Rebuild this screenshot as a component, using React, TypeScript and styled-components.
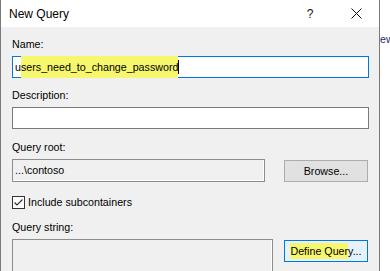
import React from 'react'
import styled, { createGlobalStyle } from 'styled-components'

const GlobalStyle = createGlobalStyle`
  html, body {
    margin: 0;
    padding: 0;
    background: #fff;
  }
  body {
    font-family: 'Liberation Sans', Arial, sans-serif;
    font-size: 10.7px;
    color: #000;
  }
  #root {
    width: 390px;
    height: 271px;
    overflow: hidden;
  }
`

const App: React.FC = () => (
  <>
    <GlobalStyle />
    <Screen>
      <Dialog>
        <TitleBar>
          <Title>New Query</Title>
          <CaptionButton>?</CaptionButton>
          <CaptionButton>
            <svg width="11" height="11" viewBox="0 0 11 11">
              <path d="M0.5 0.5 L10.5 10.5 M10.5 0.5 L0.5 10.5" stroke="#111" strokeWidth="1" fill="none" />
            </svg>
          </CaptionButton>
        </TitleBar>

        <Body>
          <Field>
            <Label>Name:</Label>
            <TextBox $focused>
              u<Marker>sers_need_to_change_password</Marker>
              <Caret />
            </TextBox>
          </Field>

          <Field $top={11}>
            <Label>Description:</Label>
            <TextBox />
          </Field>

          <Field $top={12}>
            <Label>Query root:</Label>
            <Row>
              <ReadOnlyBox $width={253} $height={23}>...\contoso</ReadOnlyBox>
              <Button>Browse...</Button>
            </Row>
          </Field>

          <CheckRow>
            <CheckBox>
              <svg width="11" height="11" viewBox="0 0 11 11">
                <path d="M1.5 5.5 L4 8 L9.5 2.5" stroke="#333" strokeWidth="1.2" fill="none" />
              </svg>
            </CheckBox>
            Include subcontainers
          </CheckRow>

          <Field $top={12}>
            <Label>Query string:</Label>
            <Row>
              <ReadOnlyBox $width={261} $height={60} />
              <Button $default>
                <Marker $pad={2}>Define Quer</Marker>y...
              </Button>
            </Row>
          </Field>
        </Body>
      </Dialog>

      <Backdrop>ew</Backdrop>
    </Screen>
  </>
)

export default App

const Screen = styled.div`
  display: flex;
  width: 390px;
  height: 271px;
  overflow: hidden;
`

const Dialog = styled.div`
  flex: none;
  width: 378px;
  height: 271px;
  border-left: 1px solid #7a7a7a;
  border-right: 1px solid #7a7a7a;
  background: #f0f0f0;
  display: flex;
  flex-direction: column;
`

const TitleBar = styled.div`
  flex: none;
  height: 27px;
  background: #fff;
  display: flex;
  align-items: center;
`

const Title = styled.div`
  flex: 1;
  padding-left: 8px;
  font-size: 12px;
`

const CaptionButton = styled.div`
  width: 46px;
  height: 27px;
  display: flex;
  align-items: center;
  justify-content: center;
  font-size: 12px;
  color: #111;
`

const Body = styled.div`
  flex: 1;
  display: flex;
  flex-direction: column;
  padding: 11px 10px 0 11px;
`

const Field = styled.div<{ $top?: number }>`
  display: flex;
  flex-direction: column;
  gap: 5px;
  margin-top: ${p => p.$top ?? 0}px;
`

const Label = styled.div`
  line-height: 13px;
`

const TextBox = styled.div<{ $focused?: boolean }>`
  box-sizing: border-box;
  height: 22px;
  border: 1px solid ${p => (p.$focused ? '#0078d7' : '#7a7a7a')};
  background: #fff;
  padding-left: 2px;
  line-height: 20px;
  white-space: nowrap;
  display: flex;
  align-items: center;
`

const Marker = styled.span<{ $pad?: number }>`
  background: #f6f76c;
  padding: ${p => p.$pad ?? 1}px 0;
`

const Caret = styled.span`
  display: inline-block;
  width: 1px;
  height: 14px;
  background: #000;
`

const Row = styled.div`
  display: flex;
  align-items: flex-start;
  justify-content: space-between;
`

const ReadOnlyBox = styled.div<{ $width: number; $height: number }>`
  box-sizing: border-box;
  width: ${p => p.$width}px;
  height: ${p => p.$height}px;
  border: 1px solid #8c8c8c;
  box-shadow: inset -1px -1px 0 #fff;
  background: #f0f0f0;
  padding-left: 2px;
  line-height: 21px;
  color: #000;
`

const Button = styled.div<{ $default?: boolean }>`
  box-sizing: border-box;
  width: 84px;
  height: 22px;
  margin: 1px 1px 0 0;
  border: 1px solid ${p => (p.$default ? '#0078d7' : '#adadad')};
  background: ${p => (p.$default ? '#e5f1fb' : '#e1e1e1')};
  display: flex;
  align-items: center;
  justify-content: center;
  white-space: nowrap;
`

const CheckRow = styled.div`
  margin-top: 14px;
  display: flex;
  align-items: center;
  gap: 3px;
  height: 13px;
  line-height: 13px;
`

const CheckBox = styled.div`
  box-sizing: border-box;
  width: 13px;
  height: 13px;
  border: 1px solid #333;
  background: #fff;
  display: flex;
  align-items: center;
  justify-content: center;
`

const Backdrop = styled.div`
  flex: 1;
  overflow: hidden;
  background: #fff;
  padding-top: 33px;
  line-height: 13px;
  color: #1f3068;
  white-space: nowrap;
`
